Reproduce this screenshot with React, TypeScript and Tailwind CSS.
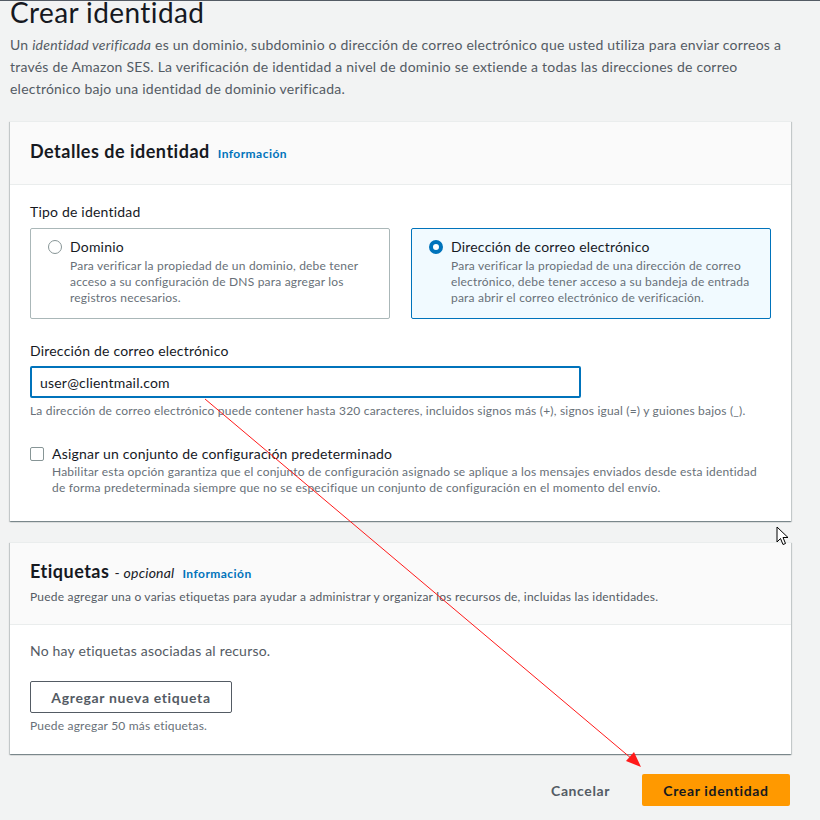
import { useState } from "react";

const FONT = "font-['Lato','Noto_Sans',sans-serif]";

function InfoLink() {
  return <span className="text-[12px] leading-[22px] font-bold tracking-[0.45px] text-[#0073bb] ml-2">Información</span>;
}

function Card({ children }: { children: React.ReactNode }) {
  return (
    <div className="bg-white border-t border-[#eaeded] shadow-[0_1px_1px_0_rgba(0,28,36,0.3),1px_1px_1px_0_rgba(0,28,36,0.15),-1px_1px_1px_0_rgba(0,28,36,0.15)]">
      {children}
    </div>
  );
}

function Radio({ checked }: { checked: boolean }) {
  return checked ? (
    <span className="w-[14px] h-[14px] rounded-full border-[4px] border-[#0073bb] bg-white shrink-0 mt-[3px]" />
  ) : (
    <span className="w-[14px] h-[14px] rounded-full border border-[#879596] bg-white shrink-0 mt-[3px]" />
  );
}

const TILES = [
  {
    id: "domain",
    label: "Dominio",
    desc: "Para verificar la propiedad de un dominio, debe tener acceso a su configuración de DNS para agregar los registros necesarios.",
  },
  {
    id: "email",
    label: "Dirección de correo electrónico",
    desc: "Para verificar la propiedad de una dirección de correo electrónico, debe tener acceso a su bandeja de entrada para abrir el correo electrónico de verificación.",
  },
];

export default function App() {
  const [type, setType] = useState("email");
  const [email, setEmail] = useState("user@clientmail.com");
  const [useDefault, setUseDefault] = useState(false);

  return (
    <div className={`${FONT} relative w-[820px] h-[820px] overflow-hidden bg-[#f2f3f3] border-t border-[#545b64] text-[#16191f] tracking-[0.2px]`}>
      <div className="pl-[10px] pr-[29px]">
        {/* Page header */}
        <h1 className="text-[28px] leading-[28px] -mt-[3px] tracking-[0.4px] text-[#16191f]">Crear identidad</h1>
        <p className="mt-[8px] text-[14px] leading-[22px] tracking-[0.22px] text-[#545b64] whitespace-nowrap">
          Un <em>identidad verificada</em> es un dominio, subdominio o dirección de correo electrónico que usted utiliza para enviar correos a
          <br />
          través de Amazon SES. La verificación de identidad a nivel de dominio se extiende a todas las direcciones de correo
          <br />
          electrónico bajo una identidad de dominio verificada.
        </p>

        {/* Identity details */}
        <div className="mt-[21px]">
          <Card>
            <div className="bg-[#fafafa] border-b border-[#eaeded] px-5 pt-[18px] pb-[22px]">
              <h2 className="h-[22px] text-[18px] leading-[22px] font-bold tracking-[0.5px] flex items-baseline">
                Detalles de identidad <InfoLink />
              </h2>
            </div>
            <div className="px-5 pt-[16px] pb-[25px]">
              <div className="text-[14px] leading-[22px]">Tipo de identidad</div>
              <div className="grid grid-cols-2 gap-[21px] mt-[5px]">
                {TILES.map((t) => {
                  const on = type === t.id;
                  return (
                    <button
                      key={t.id}
                      onClick={() => setType(t.id)}
                      className={`text-left flex gap-[8px] pl-[17px] pr-4 pt-[8px] pb-[12px] rounded-[2px] border h-[91px] ${
                        on ? "bg-[#f1faff] border-[#0073bb]" : "bg-white border-[#aab7b8]"
                      }`}
                    >
                      <Radio checked={on} />
                      <div>
                        <div className="text-[14px] leading-[20px]">{t.label}</div>
                        <div className="text-[12px] leading-[16px] text-[#687078] mt-[1px]">{t.desc}</div>
                      </div>
                    </button>
                  );
                })}
              </div>

              <div className="mt-[22px] text-[14px] leading-[20px]">Dirección de correo electrónico</div>
              <input
                value={email}
                onChange={(e) => setEmail(e.target.value)}
                className="mt-[5px] w-[551px] h-[32px] px-[8px] text-[14px] tracking-[0.2px] text-[#16191f] bg-white border-2 border-[#0073bb] rounded-[2px] outline-none"
              />
              <div className="mt-[5px] text-[12px] leading-[16px] text-[#687078]">
                La dirección de correo electrónico puede contener hasta 320 caracteres, incluidos signos más (+), signos igual (=) y guiones bajos (_).
              </div>

              <label className="mt-[25px] flex gap-[8px] cursor-pointer">
                <input
                  type="checkbox"
                  checked={useDefault}
                  onChange={(e) => setUseDefault(e.target.checked)}
                  className="appearance-none w-[14px] h-[14px] mt-[3px] border border-[#879596] rounded-[2px] bg-white shrink-0 checked:bg-[#0073bb] checked:border-[#0073bb]"
                />
                <div>
                  <div className="text-[14px] leading-[20px]">Asignar un conjunto de configuración predeterminado</div>
                  <div className="text-[12px] leading-[16px] text-[#687078]">
                    Habilitar esta opción garantiza que el conjunto de configuración asignado se aplique a los mensajes enviados desde esta identidad de forma predeterminada siempre que no se especifique un conjunto de configuración en el momento del envío.
                  </div>
                </div>
              </label>
            </div>
          </Card>
        </div>

        {/* Tags */}
        <div className="mt-[21px]">
          <Card>
            <div className="bg-[#fafafa] border-b border-[#eaeded] px-5 pt-[15px] pb-[19px]">
              <h2 className="h-[26px] text-[18px] leading-[26px] font-bold tracking-[0.5px] flex items-baseline">
                Etiquetas
                <span className="ml-[5px] text-[14px] leading-[26px] font-normal tracking-[0.2px]">
                  - <em>opcional</em>
                </span>
                <InfoLink />
              </h2>
              <p className="mt-[5px] text-[12px] leading-[16px] text-[#545b64]">
                Puede agregar una o varias etiquetas para ayudar a administrar y organizar los recursos de, incluidas las identidades.
              </p>
            </div>
            <div className="px-5 pt-[16px] pb-[20px]">
              <div className="text-[14px] leading-[20px] text-[#545b64]">No hay etiquetas asociadas al recurso.</div>
              <button className="mt-[20px] w-[202px] h-[32px] border border-[#545b64] rounded-[2px] bg-white text-[14px] font-bold tracking-[0.65px] text-[#545b64]">
                Agregar nueva etiqueta
              </button>
              <div className="mt-[5px] text-[12px] leading-[16px] text-[#687078]">Puede agregar 50 más etiquetas.</div>
            </div>
          </Card>
        </div>

        {/* Footer actions */}
        <div className="mt-[20px] flex justify-end items-center gap-[12px] pr-[1px]">
          <button className="px-[20px] h-[32px] text-[14px] font-bold tracking-[0.6px] text-[#545b64]">Cancelar</button>
          <button className="w-[148px] h-[32px] rounded-[2px] bg-[#ff9900] text-[14px] font-bold tracking-[0.65px] text-[#16191f]">
            Crear identidad
          </button>
        </div>
      </div>

      {/* Annotation arrow drawn over the screenshot */}
      <svg className="absolute inset-0 pointer-events-none" width="820" height="820" viewBox="0 0 820 820">
        <line x1="205" y1="398" x2="632" y2="758" stroke="#ff1a1a" strokeWidth="1" />
        <polygon points="641,766 626,760 634,751" fill="#ff1a1a" />
      </svg>

      {/* Mouse cursor */}
      <svg className="absolute left-[776px] top-[525px] pointer-events-none" width="14" height="20" viewBox="0 0 14 20">
        <path d="M1 1 L1 16 L4.5 12.5 L7 18.5 L9.5 17.5 L7 11.5 L12 11.5 Z" fill="white" stroke="black" strokeWidth="1" strokeLinejoin="round" />
      </svg>
    </div>
  );
}
